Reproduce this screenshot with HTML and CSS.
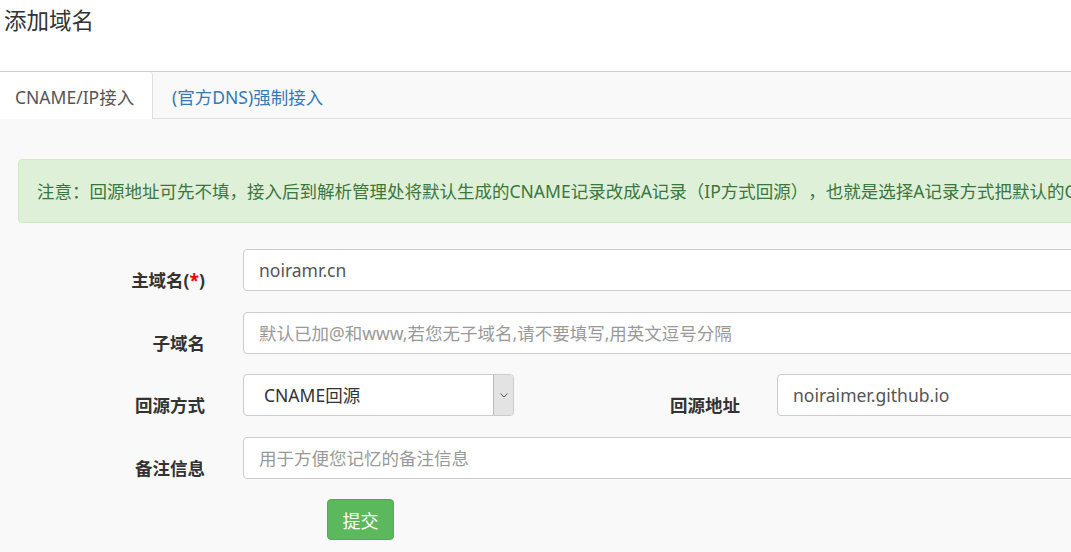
FILE: index.html
```html
<!DOCTYPE html>
<html lang="zh-CN">
<head>
  <meta charset="UTF-8">
  <meta name="viewport" content="width=device-width, initial-scale=1.0">
  <title>添加域名</title>
  <link rel="stylesheet" href="styles.css">
</head>
<body>
  <div class="page">
    <div class="header">
      <h3>添加域名</h3>
    </div>
    <div class="tabs">
      <div class="tab active">CNAME/IP接入</div>
      <div class="tab link">(官方DNS)强制接入</div>
    </div>
    <div class="content">
      <div class="alert">注意：回源地址可先不填，接入后到解析管理处将默认生成的CNAME记录改成A记录（IP方式回源），也就是选择A记录方式把默认的CNAME记录值改成您的服务器IP地址</div>
      <div class="form">
        <div class="row">
          <label class="label">主域名(<span class="req">*</span>)</label>
          <div class="input">noiramr.cn</div>
        </div>
        <div class="row">
          <label class="label">子域名</label>
          <div class="input placeholder">默认已加@和www,若您无子域名,请不要填写,用英文逗号分隔</div>
        </div>
        <div class="row">
          <label class="label">回源方式</label>
          <div class="select">
            <span class="select-text">CNAME回源</span>
            <span class="select-arrow">
              <svg width="8" height="5" viewBox="0 0 8 5"><path d="M0.5 0.5 L4 4 L7.5 0.5" fill="none" stroke="#555" stroke-width="1"/></svg>
            </span>
          </div>
          <label class="label label-2">回源地址</label>
          <div class="input input-2">noiraimer.github.io</div>
        </div>
        <div class="row">
          <label class="label">备注信息</label>
          <div class="input placeholder">用于方便您记忆的备注信息</div>
        </div>
        <div class="row-btn">
          <button class="btn">提交</button>
        </div>
      </div>
    </div>
  </div>
</body>
</html>
```

FILE: styles.css
```css
* { box-sizing: border-box; margin: 0; padding: 0; }
html, body { overflow: hidden; }
body {
  font-family: "Noto Sans", "Noto Sans CJK SC", sans-serif;
  background-color: #f9f9f9;
  color: #333;
  font-size: 17.5px;
  text-spacing-trim: space-all;
}
.page { width: 1600px; }
.header {
  height: 72px;
  background-color: #fff;
  border-bottom: 1px solid #ccc;
  padding: 7px 0 0 4px;
}
.header h3 {
  font-size: 22.5px;
  font-weight: normal;
  line-height: 28px;
  color: #333;
}
.tabs {
  display: flex;
  height: 47px;
  background-color: #f9f9f9;
  border-bottom: 1px solid #ddd;
}
.tab {
  padding: 3px 15px 0;
  line-height: 44px;
  height: 47px;
  white-space: nowrap;
}
.tab.active {
  width: 153px;
  background-color: #fff;
  color: #555;
  border-right: 1px solid #ddd;
  border-top-right-radius: 4px;
}
.tab.link { color: #337ab7; margin-left: 4px; }
.content { padding: 40px 0 0 18px; }
.alert {
  height: 64px;
  line-height: 62px;
  padding-left: 18px;
  background-color: #dff0d8;
  border: 1px solid #d6e9c6;
  border-radius: 4px;
  color: #3c763d;
  white-space: nowrap;
  overflow: hidden;
}
.form {
  margin-top: 26px;
  display: flex;
  flex-direction: column;
  gap: 20.5px;
}
.row { display: flex; align-items: flex-start; height: 42px; }
.label {
  width: 187px;
  margin-right: 38px;
  padding-top: 19px;
  line-height: 24px;
  text-align: right;
  font-weight: bold;
  color: #333;
  white-space: nowrap;
}
.req { color: #e00; }
.input {
  width: 1000px;
  height: 42px;
  line-height: 40px;
  padding-left: 15px;
  background-color: #fff;
  border: 1px solid #ccc;
  border-radius: 4px;
  color: #555;
  white-space: nowrap;
}
.input.placeholder { color: #999; }
.select {
  width: 271px;
  height: 42px;
  display: flex;
  background-color: #fff;
  border: 1px solid #ccc;
  border-radius: 4px;
  overflow: hidden;
}
.select-text {
  flex: 1;
  line-height: 40px;
  padding-left: 20px;
  color: #333;
}
.select-arrow {
  width: 20px;
  display: flex;
  align-items: center;
  justify-content: center;
  background-color: #e3e3e3;
  border-left: 1px solid #bbb;
}
.label-2 { width: 226px; margin-right: 37px; }
.input-2 { width: 600px; }
.row-btn { padding-left: 309px; }
.btn {
  width: 67px;
  height: 41px;
  font-family: inherit;
  font-size: 18px;
  color: #fff;
  background-color: #5cb85c;
  border: 1px solid #4cae4c;
  border-radius: 4px;
}
```
